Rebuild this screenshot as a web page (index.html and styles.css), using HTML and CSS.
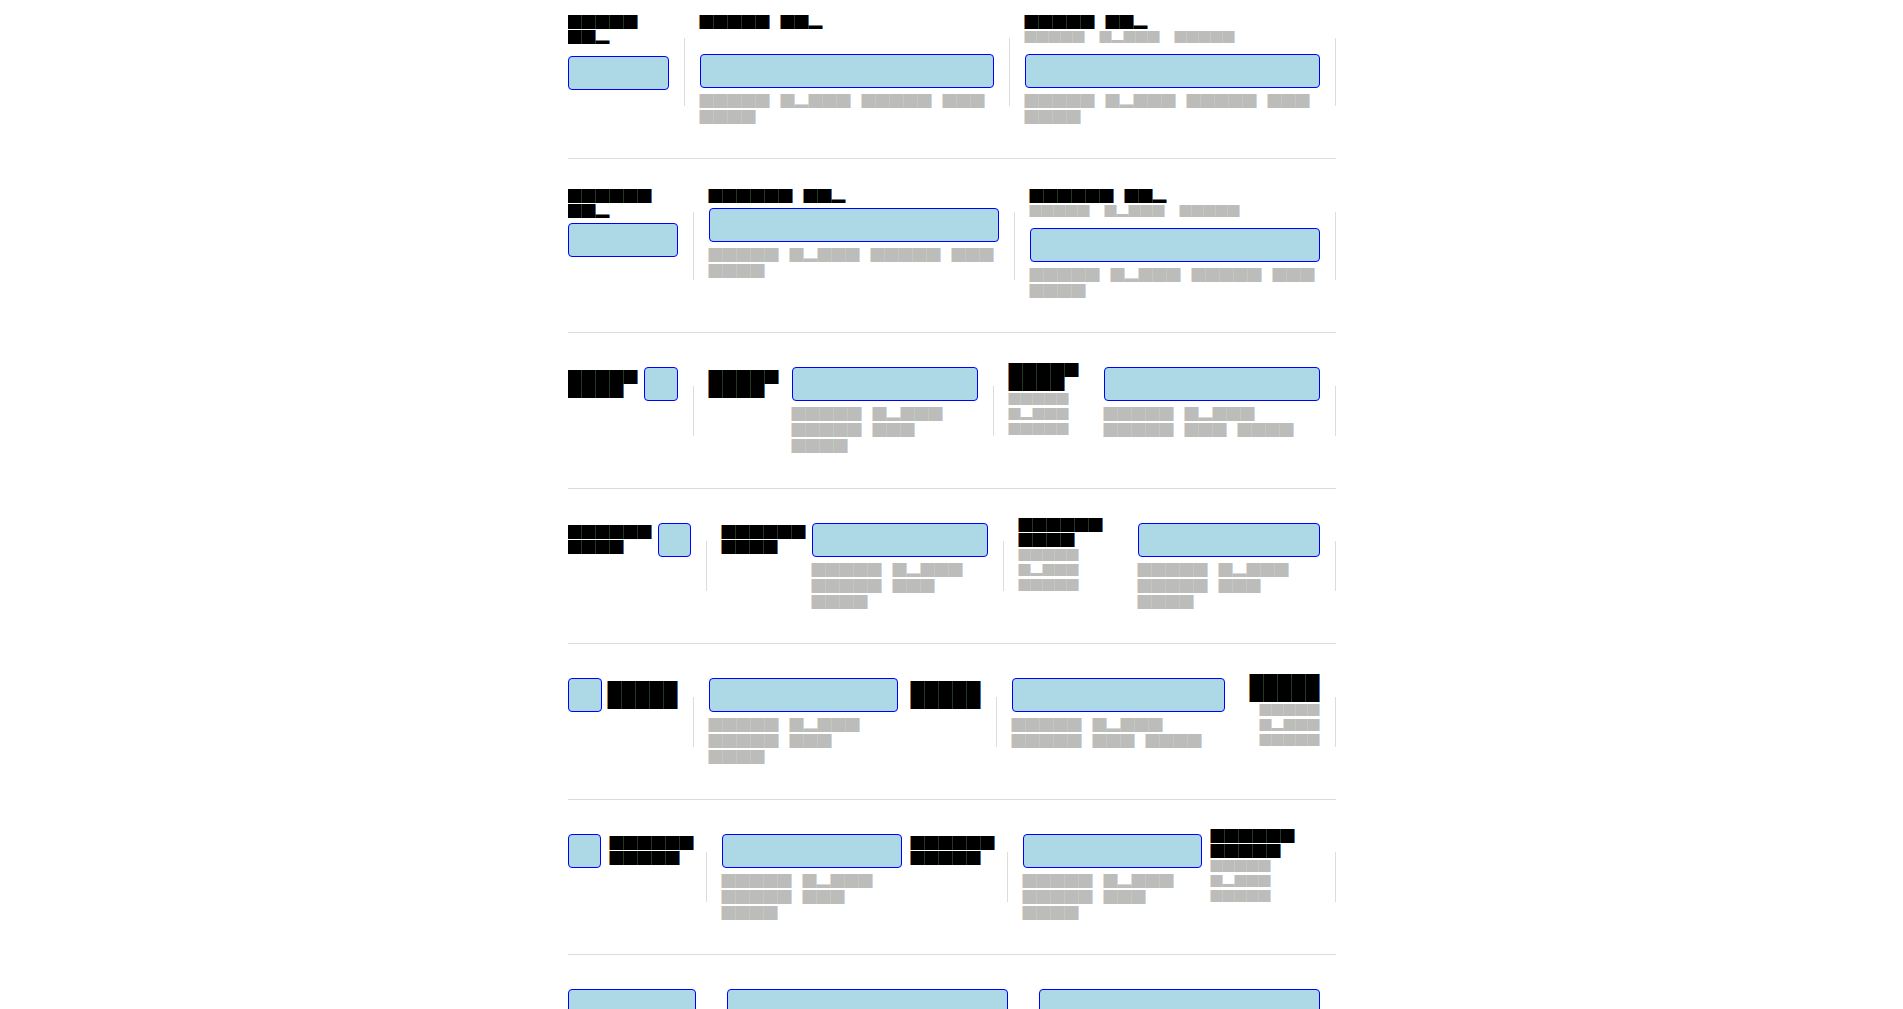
FILE: index.html
```html
<!DOCTYPE html>
<html lang="en">
<head>
<meta charset="utf-8">
<title>Form field layouts</title>
<link rel="stylesheet" href="styles.css">
</head>
<body>
<main class="page">

<section class="row stacked equal cols-1">
  <div class="field">
    <div class="head wraps"><label class="label" for="f11"><span>█████</span> <span>██▂</span></label></div>
    <div class="body"><input class="box" id="f11" type="text"></div>
  </div>
  <i class="divider"></i>
  <div class="field">
    <div class="head"><label class="label" for="f12"><span>█████</span> <span>██▂</span></label></div>
    <div class="body"><input class="box" id="f12" type="text">
      <p class="help"><span>█████</span> <span>█▂███</span> <span>█████</span> <span>███</span> <span>████</span></p></div>
  </div>
  <i class="divider"></i>
  <div class="field">
    <div class="head"><label class="label" for="f13"><span>█████</span> <span>██▂</span></label>
      <p class="desc"><span>█████</span> <span>█▂███</span> <span>█████</span></p></div>
    <div class="body"><input class="box" id="f13" type="text">
      <p class="help"><span>█████</span> <span>█▂███</span> <span>█████</span> <span>███</span> <span>████</span></p></div>
  </div>
  <i class="divider"></i>
</section>

<section class="row stacked cols-2">
  <div class="field">
    <div class="head"><label class="label" for="f21"><span>██████</span> <span>██▂</span></label></div>
    <div class="body"><input class="box" id="f21" type="text"></div>
  </div>
  <i class="divider"></i>
  <div class="field">
    <div class="head"><label class="label" for="f22"><span>██████</span> <span>██▂</span></label></div>
    <div class="body"><input class="box" id="f22" type="text">
      <p class="help"><span>█████</span> <span>█▂███</span> <span>█████</span> <span>███</span> <span>████</span></p></div>
  </div>
  <i class="divider"></i>
  <div class="field">
    <div class="head"><label class="label" for="f23"><span>██████</span> <span>██▂</span></label>
      <p class="desc"><span>█████</span> <span>█▂███</span> <span>█████</span></p></div>
    <div class="body"><input class="box" id="f23" type="text">
      <p class="help"><span>█████</span> <span>█▂███</span> <span>█████</span> <span>███</span> <span>████</span></p></div>
  </div>
  <i class="divider"></i>
</section>

<section class="row inline cols-3">
  <div class="field">
    <div class="head"><label class="label" for="f31"><span>█████</span> <span>████</span></label></div>
    <div class="body"><input class="box" id="f31" type="text"></div>
  </div>
  <i class="divider"></i>
  <div class="field">
    <div class="head"><label class="label" for="f32"><span>█████</span> <span>████</span></label></div>
    <div class="body"><input class="box" id="f32" type="text">
      <p class="help"><span>█████</span> <span>█▂███</span> <span>█████</span> <span>███</span> <span>████</span></p></div>
  </div>
  <i class="divider"></i>
  <div class="field described">
    <div class="head"><label class="label" for="f33"><span>█████</span> <span>████</span></label>
      <p class="desc"><span>█████</span> <span>█▂███</span> <span>█████</span></p></div>
    <div class="body"><input class="box" id="f33" type="text">
      <p class="help"><span>█████</span> <span>█▂███</span> <span>█████</span> <span>███</span> <span>████</span></p></div>
  </div>
  <i class="divider"></i>
</section>

<section class="row inline loose cols-4">
  <div class="field">
    <div class="head"><label class="label" for="f41"><span>██████</span> <span>████</span></label></div>
    <div class="body"><input class="box" id="f41" type="text"></div>
  </div>
  <i class="divider"></i>
  <div class="field">
    <div class="head"><label class="label" for="f42"><span>██████</span> <span>████</span></label></div>
    <div class="body"><input class="box" id="f42" type="text">
      <p class="help"><span>█████</span> <span>█▂███</span> <span>█████</span> <span>███</span> <span>████</span></p></div>
  </div>
  <i class="divider"></i>
  <div class="field described">
    <div class="head"><label class="label" for="f43"><span>██████</span> <span>████</span></label>
      <p class="desc"><span>█████</span> <span>█▂███</span> <span>█████</span></p></div>
    <div class="body"><input class="box" id="f43" type="text">
      <p class="help"><span>█████</span> <span>█▂███</span> <span>█████</span> <span>███</span> <span>████</span></p></div>
  </div>
  <i class="divider"></i>
</section>

<section class="row inline after to-end cols-5">
  <div class="field">
    <div class="head"><label class="label" for="f51"><span>█████</span> <span>█████</span></label></div>
    <div class="body"><input class="box" id="f51" type="text"></div>
  </div>
  <i class="divider"></i>
  <div class="field">
    <div class="head"><label class="label" for="f52"><span>█████</span> <span>█████</span></label></div>
    <div class="body"><input class="box" id="f52" type="text">
      <p class="help"><span>█████</span> <span>█▂███</span> <span>█████</span> <span>███</span> <span>████</span></p></div>
  </div>
  <i class="divider"></i>
  <div class="field described">
    <div class="head"><label class="label" for="f53"><span>█████</span> <span>█████</span></label>
      <p class="desc"><span>█████</span> <span>█▂███</span> <span>█████</span></p></div>
    <div class="body"><input class="box" id="f53" type="text">
      <p class="help"><span>█████</span> <span>█▂███</span> <span>█████</span> <span>███</span> <span>████</span></p></div>
  </div>
  <i class="divider"></i>
</section>

<section class="row inline loose after cols-6">
  <div class="field">
    <div class="head"><label class="label" for="f61"><span>██████</span> <span>█████</span></label></div>
    <div class="body"><input class="box" id="f61" type="text"></div>
  </div>
  <i class="divider"></i>
  <div class="field">
    <div class="head"><label class="label" for="f62"><span>██████</span> <span>█████</span></label></div>
    <div class="body"><input class="box" id="f62" type="text">
      <p class="help"><span>█████</span> <span>█▂███</span> <span>█████</span> <span>███</span> <span>████</span></p></div>
  </div>
  <i class="divider"></i>
  <div class="field described">
    <div class="head"><label class="label" for="f63"><span>██████</span> <span>█████</span></label>
      <p class="desc"><span>█████</span> <span>█▂███</span> <span>█████</span></p></div>
    <div class="body"><input class="box" id="f63" type="text">
      <p class="help"><span>█████</span> <span>█▂███</span> <span>█████</span> <span>███</span> <span>████</span></p></div>
  </div>
  <i class="divider"></i>
</section>

<section class="row inline bare cols-7">
  <div class="field"><div class="body"><input class="box" type="text" aria-label="First"></div></div>
  <i class="divider"></i>
  <div class="field"><div class="body"><input class="box" type="text" aria-label="Second"></div></div>
  <i class="divider"></i>
  <div class="field"><div class="body"><input class="box" type="text" aria-label="Third"></div></div>
  <i class="divider"></i>
</section>

</main>
</body>
</html>
```
FILE: styles.css
```css
* {
  box-sizing: border-box;
}

body {
  margin: 0;
  background: #fff;
  color: #000;
  font-family: "Noto Sans CJK JP", "Noto Sans CJK SC", sans-serif;
  font-size: 14px;
}

p {
  margin: 0;
}

.page {
  max-width: 768px;
  height: 100vh;
  margin: 0 auto;
  overflow: hidden;
}

/* A row holds three fields, each followed by a thin divider */
.row {
  display: grid;
  grid-template-columns: var(--cols);
  grid-auto-rows: minmax(98px, auto);
  column-gap: 15px;
  padding: 29px 0 28px;
  border-bottom: 1px solid #dcdcdc;
}

.cols-1 { --cols: 101px 1px 294fr 1px 295fr 1px; }
.cols-2 { --cols: 110px 1px 1fr 1px 1fr 1px; }
.cols-3 { --cols: 110px 1px 269fr 1px 311fr 1px; }
.cols-4 { --cols: 123px 1px 266fr 1px 301fr 1px; }
.cols-5 { --cols: 110px 1px 272fr 1px 308fr 1px; }
.cols-6 { --cols: 123px 1px 270fr 1px 297fr 1px; }
.cols-7 { --cols: 128px 1px 1fr 1px 1fr 1px; }

.stacked {
  grid-auto-rows: minmax(116px, auto);
}

.row:first-child {
  padding-top: 14px;
}

.loose {
  padding-top: 28px;
}

.divider {
  align-self: center;
  height: 50px;
  background: #dcdcdc;
}

.stacked .divider {
  height: 68px;
}

.field {
  min-width: 0;
}

/* Text runs wrap word by word */
.label,
.desc,
.help {
  display: flex;
  flex-wrap: wrap;
  column-gap: 11px;
  white-space: nowrap;
}

.label {
  line-height: 14px;
}

.stacked .label,
.loose .label {
  line-height: 15px;
}

.desc {
  column-gap: 15px;
  font-size: 12px;
  line-height: 15px;
  color: #bcbcba;
}

.help {
  margin-top: 4px;
  line-height: 16px;
  color: #bcbcba;
}

.box {
  display: block;
  width: 100%;
  height: 34px;
  padding: 0 8px;
  border: 1px solid #00f;
  border-radius: 4px;
  background: #add8e6;
  font: inherit;
}

/* Label above the control */
.stacked .head {
  padding-bottom: 5px;
}

.stacked .desc {
  padding-bottom: 5px;
}

.equal .head {
  min-height: 40px;
}

.equal .wraps {
  padding-bottom: 12px;
}

/* Label beside the control */
.inline .field {
  display: flex;
}

.inline .head {
  flex: none;
  width: 83px;
  padding-top: 7px;
}

.inline .field:first-child .head {
  width: 76px;
}

.inline .body {
  flex: 1;
  min-width: 0;
  padding-top: 5px;
}

.inline.loose .body {
  padding-top: 6px;
}

.inline .described .head {
  width: 95px;
  padding-top: 0;
}

.inline .desc {
  padding-top: 1px;
}

.inline.loose .head,
.inline.loose .field:first-child .head {
  width: 90px;
}

.inline.loose .described .head {
  width: 119px;
}

.inline.loose .desc {
  padding-top: 0;
}

/* Control first, label after it */
.after .field {
  flex-direction: row-reverse;
}

.after.loose .head,
.after.loose .field:first-child .head {
  padding-left: 9px;
  margin-right: -4px;
  width: 94px;
}

.after.loose .described .head {
  width: 122px;
}

.to-end .label,
.to-end .desc {
  justify-content: flex-end;
}

.bare .divider {
  margin-top: 2px;
}
```
